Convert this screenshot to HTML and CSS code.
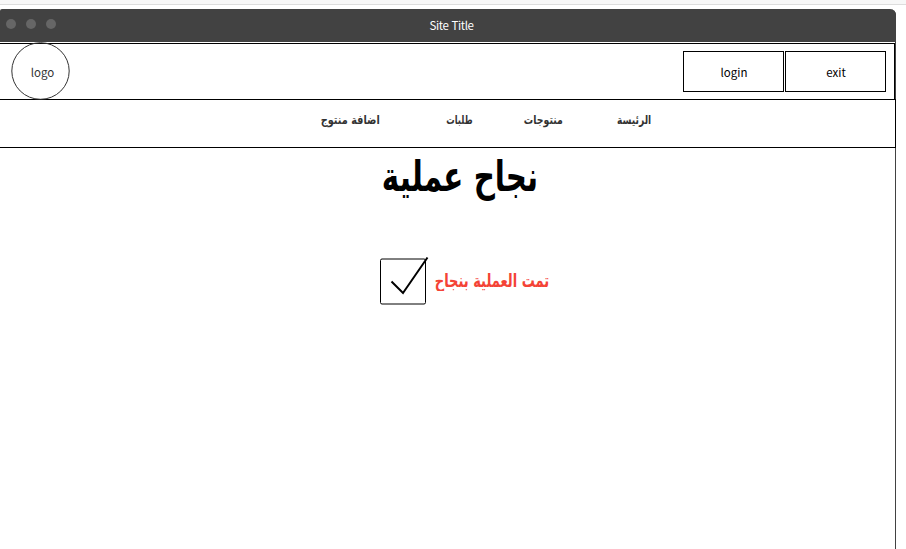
FILE: index.html
```
<!DOCTYPE html>
<html lang="ar">
<head>
<meta charset="utf-8">
<title>نجاح عملية</title>
<link rel="stylesheet" href="styles.css">
</head>
<body>
<div class="strip"></div>
<div class="window">
  <div class="titlebar">
    <div class="dots"><i></i><i></i><i></i></div>
    <span class="site-title">Site Title</span>
  </div>
  <header class="header">
    <div class="logo"><svg width="59" height="59" viewBox="0 0 59 59"><ellipse cx="29.5" cy="29" rx="28.7" ry="28.3"/></svg><span>logo</span></div>
    <div class="buttons"><button>login</button><button>exit</button></div>
  </header>
  <nav class="nav" dir="rtl">
    <a class="home"><span>الرئيسة</span></a>
    <a class="products"><span>منتوجات</span></a>
    <a class="orders"><span>طلبات</span></a>
    <a class="add"><span>اضافة منتوج</span></a>
  </nav>
  <main>
    <h1 dir="rtl"><span>نجاح عملية</span></h1>
    <div class="result">
      <svg class="check" width="50" height="50" viewBox="0 0 50 50">
        <rect x="1.5" y="3" width="45" height="45" rx="1.5"/>
        <path d="M12.5 25.5 24 37 48.5 1.5"/>
      </svg>
      <p dir="rtl"><span>تمت العملية بنجاح</span></p>
    </div>
  </main>
</div>
</body>
</html>
```
FILE: styles.css
```
* { box-sizing: border-box; }
body {
  margin: 0;
  height: 549px;
  overflow: hidden;
  background: #fff;
  font-family: "Noto Sans CJK SC", "DejaVu Sans", sans-serif;
  font-size: 11.5px;
  color: #000;
}
.strip {
  height: 5px;
  margin-bottom: 4px;
  background: #f7f7f7;
  border-bottom: 1px solid #ddd;
}
.window {
  width: 896px;
  height: 560px;
  border-right: 1px solid #424242;
  border-radius: 2px 6px 0 0;
}
.titlebar {
  display: grid;
  grid-template-columns: 400px 103px;
  align-items: center;
  width: 896px;
  height: 33px;
  background: #424242;
  border-radius: 2px 6px 0 0;
  color: #fff;
}
.dots { display: flex; gap: 10px; padding: 0 0 4px 6.4px; }
.dots i { width: 10px; height: 10px; border-radius: 50%; background: #666; }
.site-title {
  text-align: center;
  line-height: 33px;
  letter-spacing: -.4px;
  word-spacing: 1px;
}
.header {
  display: flex;
  justify-content: space-between;
  width: 895px;
  height: 57px;
  margin-top: 1px;
  border: 1px solid #000;
  border-width: 1px 1px 0 0;
}
.logo { display: grid; width: 59px; height: 59px; margin: -2px 0 0 11px; }
.logo svg, .logo span { grid-area: 1 / 1; }
.logo ellipse { fill: none; stroke: #333; stroke-width: 1; }
.logo span { place-self: center; padding: 0 0 0 4px; color: #333; }
.buttons { display: flex; gap: 1px; padding: 7px 8px 0 0; }
.buttons button {
  width: 101px;
  height: 41px;
  padding: 0 0 0 1px;
  border: 1px solid #000;
  background: #fff;
  font: inherit;
  color: #000;
}
.nav {
  display: flex;
  width: 896px;
  height: 49px;
  margin-top: -1px;
  padding: 10px 244px 0 0;
  border: 1px solid #000;
  border-left: 0;
  color: #333;
  font-family: "DejaVu Sans", sans-serif;
  font-size: 11px;
  font-weight: bold;
  line-height: 22px;
  white-space: nowrap;
}
.nav a { display: block; }
.nav span, h1 span, .result p span { display: inline-block; transform-origin: right center; }
.nav .home span { transform: scale(.83, 1.1); }
.nav .products span { transform: scale(.85, 1.1); }
.nav .orders span { transform: scale(.76, 1.1); }
.nav .add span { transform: scale(.885, 1.1); }
.home { width: 88px; }
.products { width: 90px; }
.orders { width: 93px; }
.add { width: 60px; }
h1 {
  height: 64px;
  margin: 0;
  padding-right: 357px;
  font-family: "DejaVu Sans", sans-serif;
  font-size: 38px;
  line-height: 58px;
  white-space: nowrap;
}
h1 span { transform: scale(.773, 1.1); }
.result { display: flex; gap: 6px; margin: 44px 0 0 379px; }
.check { flex: none; fill: none; stroke: #000; }
.check rect { stroke-width: 1; }
.check path { stroke-width: 2; }
.result p {
  width: 114px;
  margin: 0;
  color: #f44336;
  font-family: "DejaVu Sans", sans-serif;
  font-size: 17px;
  font-weight: bold;
  line-height: 48px;
  white-space: nowrap;
}
.result p span { transform: scale(.767, 1.1); }
```
